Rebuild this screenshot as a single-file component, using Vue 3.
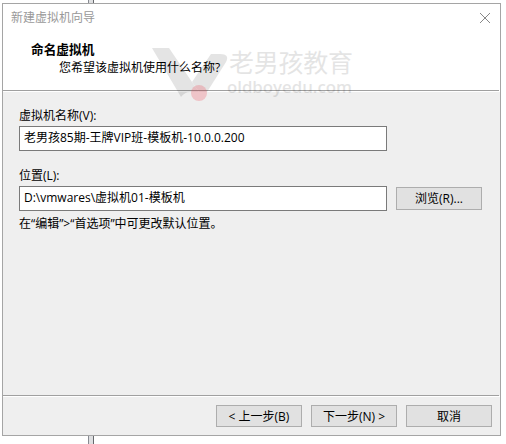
<script setup>
import { ref } from 'vue'

const machineName = ref('老男孩85期-王牌VIP班-模板机-10.0.0.200')
const location = ref('D:\\vmwares\\虚拟机01-模板机')
</script>

<template>
  <div class="desktop">
    <div class="strip top"></div>
    <section class="dialog">
      <header class="header">
        <div class="titlebar">
          <span>新建虚拟机向导</span>
          <svg class="close" width="12" height="12" viewBox="0 0 12 12"><path d="M1 1L11 11M11 1L1 11" /></svg>
        </div>
        <h1>命名虚拟机</h1>
        <p class="subtitle">您希望该虚拟机使用什么名称<span class="ask">?</span></p>
      </header>
      <main class="body">
        <label class="label">虚拟机名称<span class="lat">(V):</span></label>
        <input v-model="machineName" class="field name" />
        <label class="label second">位置<span class="lat">(L):</span></label>
        <div class="row">
          <input v-model="location" class="field path" />
          <button class="btn browse">浏览<span class="lat">(R)...</span></button>
        </div>
        <p class="hint">在“编辑”&gt;“首选项”中可更改默认位置。</p>
      </main>
      <footer class="footer">
        <button class="btn">&lt; 上一步<span class="lat">(B)</span></button>
        <button class="btn">下一步<span class="lat">(N)</span> &gt;</button>
        <button class="btn">取消</button>
      </footer>
    </section>
    <div class="strip bottom"></div>
    <svg class="watermark" width="210" height="64" viewBox="0 0 210 64">
      <g class="ink">
        <path d="M2 3H19L42 37L49 47H40Q35 47 31 52Z" />
        <path d="M61 9H70Q80 9 76 17L57 47H49L42 37Z" />
        <text class="brand" x="79" y="27" textLength="124">老男孩教育</text>
        <text class="domain" x="77" y="47.5" textLength="125" lengthAdjust="spacingAndGlyphs">oldboyedu.com</text>
      </g>
      <circle cx="49" cy="48" r="8" />
    </svg>
  </div>
</template>

<style>
body { background: #fff; overflow: hidden; }
</style>

<style scoped>
* { box-sizing: border-box; margin: 0; }
.desktop {
  position: relative;
  width: 506px;
  height: 444px;
  font: 12px/16px "Open Sans", "Noto Sans CJK SC", sans-serif;
  color: #000;
}
.strip { width: 6px; margin-left: 88px; background: #dedfe1; border-left: 1px solid #878a91; border-right: 1px solid #66686c; }
.strip.top { height: 3px; }
.strip.bottom { height: 8px; }
.dialog {
  display: flex;
  flex-direction: column;
  width: 499px;
  height: 433px;
  margin-left: 2px;
  border: 1px solid #a5a5a5;
  background: #efefef;
}
.header { height: 87px; background: linear-gradient(#a0a0a0, #a0a0a0) 0 86px / 496px 1px no-repeat #fff; }
.titlebar { display: flex; justify-content: space-between; padding: 6px 9px 0 8px; color: #999; }
.close { margin-top: 2px; fill: none; stroke: #888; stroke-width: 1; }
h1 { margin: 15px 0 0 28px; font-size: 12.7px; line-height: 16px; font-weight: 700; }
.subtitle { margin: 3px 0 0 56px; line-height: 16px; }
.body { display: flex; flex-direction: column; height: 304px; padding: 16px 0 0 16px; border-top: 1px solid #fff; }
.label { height: 18px; line-height: 16px; }
.second { margin-top: 17px; }
.field {
  width: 368px;
  height: 25px;
  padding: 0 4px 3px;
  border: 1px solid #7a7a7a;
  border-radius: 0;
  background: #fff;
  color: #000;
  font: inherit;
  outline: none;
}
.row { display: flex; align-items: center; gap: 9px; }
.hint { margin-top: 5px; }
.btn {
  width: 86px;
  height: 22px;
  padding: 1px 0 0;
  border: 1px solid #adadad;
  border-radius: 0;
  background: #e1e1e1;
  color: #000;
  font: inherit;
  line-height: 18px;
}
.browse { height: 23px; }
.footer {
  display: flex;
  justify-content: flex-end;
  gap: 9px;
  height: 40px;
  padding: 10px 8px 0 0;
  background: linear-gradient(#a0a0a0, #a0a0a0) 0 0 / 496px 1px no-repeat, linear-gradient(#fff, #fff) 0 1px / 497px 1px no-repeat;
}
.watermark { position: absolute; left: 150px; top: 45px; pointer-events: none; }
.ink { fill: #000; opacity: 0.1; }
.brand { font: 400 25px "Noto Sans CJK SC", sans-serif; }
.domain { font: 600 17px "Open Sans", sans-serif; }
.watermark circle { fill: #ef3b4b; opacity: 0.24; }
</style>
